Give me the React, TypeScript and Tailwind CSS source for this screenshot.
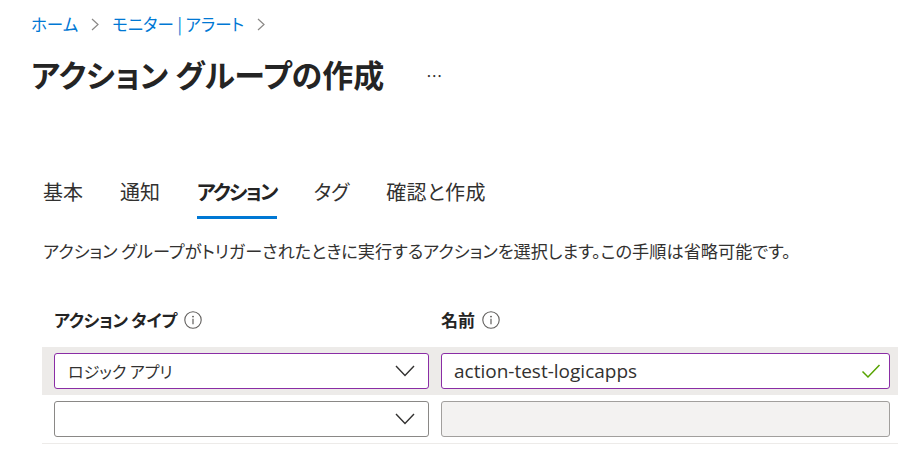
import React from "react";

const jp = "[font-family:'Noto_Sans_CJK_JP','Noto_Sans',sans-serif] [font-feature-settings:'palt']";

function Chevron() {
  return (
    <svg width="20" height="12" viewBox="0 0 20 12">
      <path d="M1 1 L10 10.5 L19 1" fill="none" stroke="#323130" strokeWidth="1.4" />
    </svg>
  );
}

function Info() {
  return (
    <svg width="18" height="18" viewBox="0 0 18 18" className="ml-[7px]">
      <circle cx="9" cy="9" r="8.2" fill="none" stroke="#605e5c" strokeWidth="1.1" />
      <circle cx="9" cy="5.6" r="0.95" fill="#605e5c" />
      <path d="M9 7.8 V13.2" stroke="#605e5c" strokeWidth="1.2" />
    </svg>
  );
}

function Crumb() {
  return (
    <svg width="8" height="13" viewBox="0 0 8 13" className="mx-[13px]">
      <path d="M1 1 L7 6.5 L1 12" fill="none" stroke="#8a8886" strokeWidth="1.2" />
    </svg>
  );
}

export default function App() {
  const tabs = ["基本", "通知", "アクション", "タグ", "確認と作成"];
  return (
    <div className={`w-[898px] h-[454px] bg-white overflow-hidden text-[#323130] ${jp}`}>
      {/* breadcrumb */}
      <div className="flex items-center pl-[31px] h-[48px] text-[16.5px] text-[#0078d4] leading-none">
        <span>ホーム</span>
        <Crumb />
        <span>モニター | アラート</span>
        <Crumb />
      </div>
      {/* title */}
      <div className="flex items-center pl-[31px] h-[50px]">
        <h1 className="text-[31px] font-bold leading-none text-[#242424]">アクション グループの作成</h1>
        <span className="ml-[42px] text-[16px] text-[#323130] tracking-[1px] mt-[4px]">…</span>
      </div>
      {/* tabs */}
      <div className="flex pl-[43px] mt-[81px] gap-[37px]">
        {tabs.map((t, i) => (
          <div key={t} className="flex flex-col items-stretch">
            <span
              className={`text-[20px] leading-[26px] ${
                i === 2 ? "font-bold text-[#242424] tracking-[-1.8px]" : "text-[#323130]"
              } ${i === 4 ? "tracking-[0.4px]" : ""}`}
            >
              {t}
            </span>
            <div className={`mt-[11px] h-[3px] ${i === 2 ? "bg-[#0078d4]" : "bg-transparent"}`} />
          </div>
        ))}
      </div>
      {/* description */}
      <p className="pl-[43px] mt-[21px] text-[17.2px] leading-[22px] text-[#323130] whitespace-nowrap">
        アクション グループがトリガーされたときに実行するアクションを選択します。この手順は省略可能です。
      </p>
      {/* labels */}
      <div className="flex ml-[42px] mt-[46px] h-[24px] items-center">
        <div className="w-[387px] pl-[12px] flex items-center">
          <span className="text-[17px] font-bold text-[#242424] tracking-[-0.3px]">アクション タイプ</span>
          <Info />
        </div>
        <div className="pl-[12px] flex items-center">
          <span className="text-[17px] font-bold text-[#242424]">名前</span>
          <Info />
        </div>
      </div>
      {/* rows */}
      <div className="ml-[42px] mt-[15px]">
        <div className="flex gap-[12px] pl-[12px] pr-[8px] py-[6px] bg-[#edebe9]">
          <div className="w-[375px] h-[36px] bg-white border border-[#8a2da5] rounded-[3px] flex items-center justify-between pl-[13px] pr-[13px]">
            <span className="text-[16px] text-[#323130]">ロジック アプリ</span>
            <Chevron />
          </div>
          <div className="flex-1 h-[36px] bg-white border border-[#8a2da5] rounded-[3px] flex items-center justify-between pl-[12px] pr-[8px]">
            <span className="text-[19px] text-[#323130] [font-family:'Open_Sans','Noto_Sans',sans-serif]">
              action-test-logicapps
            </span>
            <svg width="20" height="16" viewBox="0 0 20 16">
              <path d="M1.5 8.5 L7 14 L18.5 2" fill="none" stroke="#57a300" strokeWidth="1.5" />
            </svg>
          </div>
        </div>
        <div className="flex gap-[12px] pl-[12px] pr-[8px] py-[6px] border-b border-[#edebe9]">
          <div className="w-[375px] h-[36px] bg-white border border-[#8a8886] rounded-[3px] flex items-center justify-end pr-[13px]">
            <Chevron />
          </div>
          <div className="flex-1 h-[36px] bg-[#f3f2f1] border border-[#a19f9d] rounded-[3px]" />
        </div>
      </div>
    </div>
  );
}
